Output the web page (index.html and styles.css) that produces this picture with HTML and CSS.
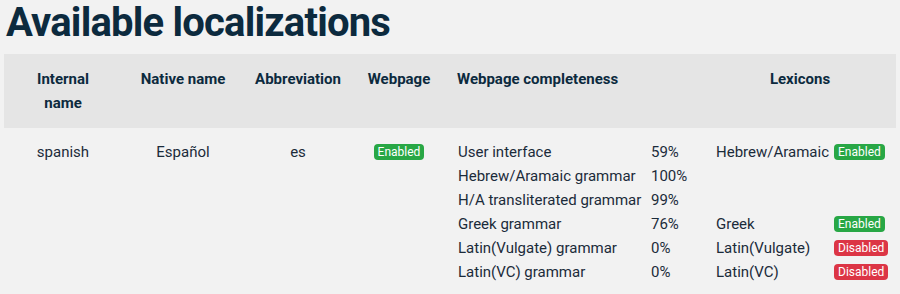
FILE: index.html
```html
<!DOCTYPE html>
<html>
<head>
<meta charset="utf-8">
<title>Available localizations</title>
<link rel="stylesheet" href="styles.css">
</head>
<body>
<main class="page">
  <h1 class="title">Available localizations</h1>
  <table class="loc-table">
    <colgroup>
      <col class="c-internal">
      <col class="c-native">
      <col class="c-abbr">
      <col class="c-web">
      <col class="c-complete">
      <col class="c-lex">
    </colgroup>
    <thead>
      <tr class="head-row">
        <th class="th-wrap">Internal name</th>
        <th>Native name</th>
        <th>Abbreviation</th>
        <th>Webpage</th>
        <th class="th-left">Webpage completeness</th>
        <th>Lexicons</th>
      </tr>
    </thead>
    <tbody>
      <tr>
        <td class="td-center">spanish</td>
        <td class="td-center">Español</td>
        <td class="td-center">es</td>
        <td class="td-center"><span class="badge badge-on">Enabled</span></td>
        <td>
          <div class="completeness">
            <span>User interface</span><span>59%</span>
            <span>Hebrew/Aramaic grammar</span><span>100%</span>
            <span>H/A transliterated grammar</span><span>99%</span>
            <span>Greek grammar</span><span>76%</span>
            <span>Latin(Vulgate) grammar</span><span>0%</span>
            <span>Latin(VC) grammar</span><span>0%</span>
          </div>
        </td>
        <td>
          <div class="lexicons">
            <span>Hebrew/Aramaic</span><span><span class="badge badge-on">Enabled</span></span>
            <span></span><span></span>
            <span></span><span></span>
            <span>Greek</span><span><span class="badge badge-on">Enabled</span></span>
            <span>Latin(Vulgate)</span><span><span class="badge badge-off">Disabled</span></span>
            <span>Latin(VC)</span><span><span class="badge badge-off">Disabled</span></span>
          </div>
        </td>
      </tr>
    </tbody>
  </table>
</main>
</body>
</html>
```
FILE: styles.css
```css
html, body {
  margin: 0;
  padding: 0;
  background: #f2f2f2;
}

body {
  font-family: Roboto, "Noto Sans", sans-serif;
  color: #1b2b3a;
}

.page {
  padding: 0 4px;
}

.title {
  margin: 0 0 8px 0;
  font-size: 40px;
  line-height: 46px;
  font-weight: 700;
  letter-spacing: -0.8px;
  color: #0c2a3e;
  padding-left: 2px;
}

.loc-table {
  width: 892px;
  table-layout: fixed;
  border-collapse: collapse;
}

.c-internal { width: 118px; }
.c-native { width: 122px; }
.c-abbr { width: 108px; }
.c-web { width: 94px; }
.c-complete { width: 258px; }
.c-lex { width: 192px; }

.head-row {
  background: #e5e5e5;
}

.head-row th {
  padding: 13px 4px;
  font-size: 15px;
  line-height: 24px;
  font-weight: 700;
  color: #0c2a3e;
  text-align: center;
  vertical-align: top;
}

.head-row .th-wrap {
  padding: 13px 18px;
}

.head-row .th-left {
  text-align: left;
  padding-left: 11px;
}

.loc-table td {
  padding: 12px;
  font-size: 15px;
  line-height: 24px;
  vertical-align: top;
}

.loc-table .td-center {
  text-align: center;
}

.completeness {
  display: grid;
  grid-template-columns: 193px auto;
  grid-auto-rows: 24px;
}

.lexicons {
  display: grid;
  grid-template-columns: 118px auto;
  grid-auto-rows: 24px;
}

.badge {
  display: inline-block;
  vertical-align: 1px;
  height: 16px;
  line-height: 16px;
  padding: 0 4px;
  border-radius: 4px;
  font-size: 12px;
  color: #fff;
}

.badge-on {
  background: #28a745;
}

.badge-off {
  background: #dc3545;
}
```
